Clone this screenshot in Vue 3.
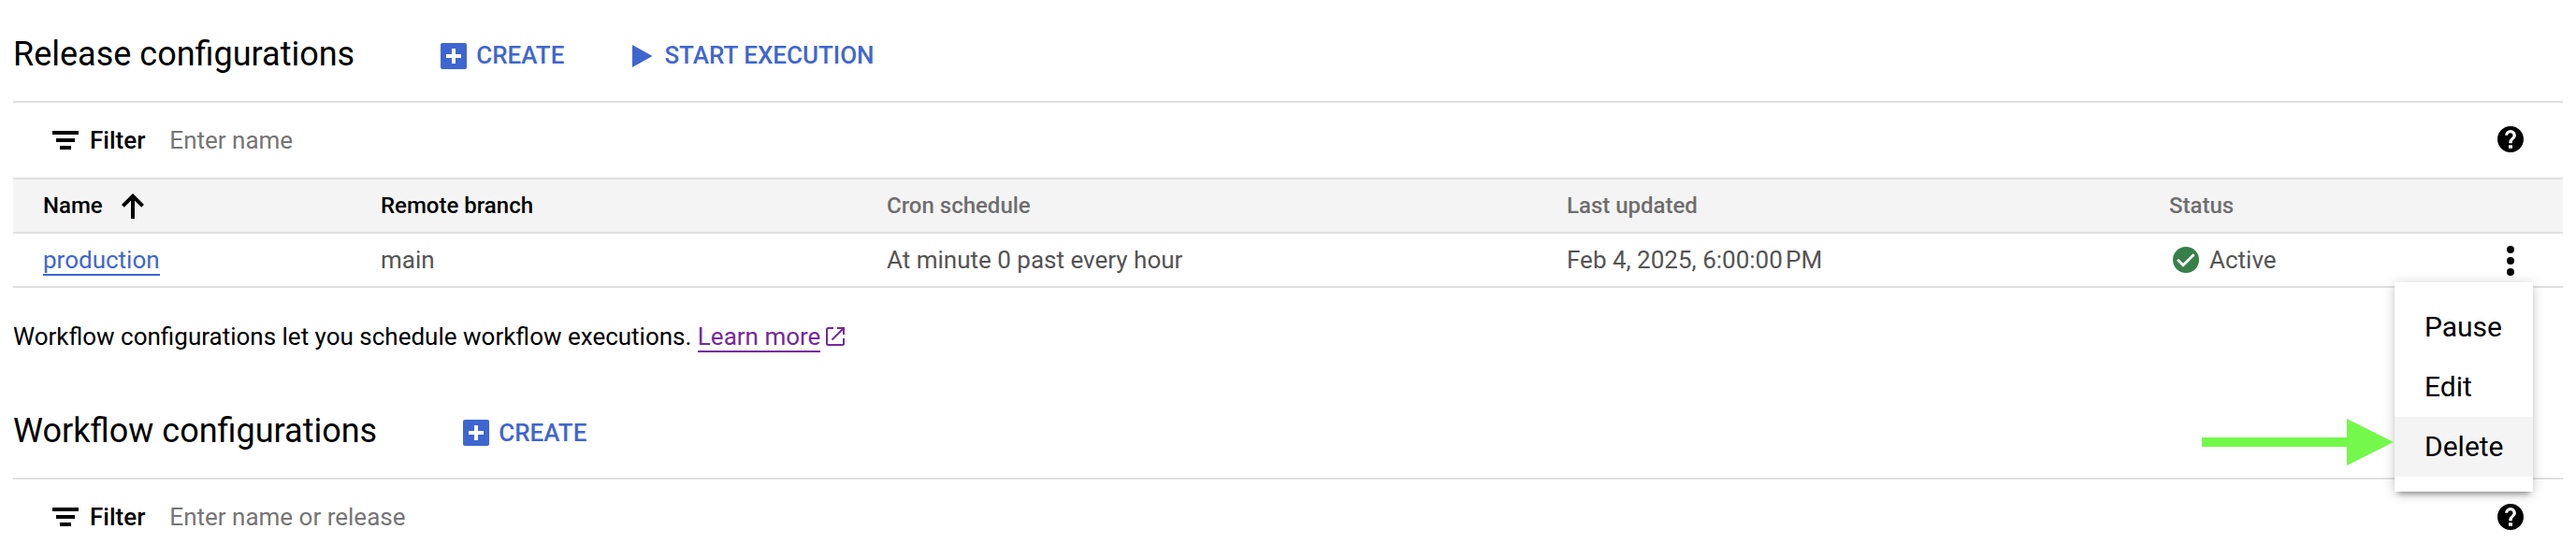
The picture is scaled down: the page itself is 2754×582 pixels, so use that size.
<script setup>
const columns = [
  { label: 'Name', sorted: true, strong: true },
  { label: 'Remote branch', strong: true },
  { label: 'Cron schedule' },
  { label: 'Last updated' },
  { label: 'Status' },
]
const actions = ['Pause', 'Edit', 'Delete']
</script>

<template>
  <main class="page">
    <section>
      <header class="head">
        <h2>Release configurations</h2>
        <button class="btn create">
          <svg width="28" height="28" viewBox="0 0 28 28"><rect width="28" height="28" rx="2" fill="currentColor" /><path d="M6 14h16M14 6v16" stroke="#fff" stroke-width="4" /></svg>
          <span>CREATE</span>
        </button>
        <button class="btn start">
          <svg width="22" height="24" viewBox="0 0 22 24"><path d="M0 0l21.500 12L0 24z" fill="currentColor" /></svg>
          <span>START EXECUTION</span>
        </button>
      </header>
      <div class="filter">
        <svg class="lines" width="28" height="20" viewBox="0 0 28 20"><path d="M0 0h28v4H0zM4 8h20v4H4zM8 16h12v4H8z" /></svg>
        <b>Filter</b>
        <span class="hint">Enter name</span>
        <svg class="help" width="28" height="28" viewBox="2 2 20 20"><path d="M12 2C6.48 2 2 6.48 2 12s4.48 10 10 10 10-4.48 10-10S17.52 2 12 2zm1.400 17h-2.800v-2.500h2.800V19zm1.900-7.750l-.9.92c-.72.73-1.200 1.330-1.200 2.830h-2.400v-.5c0-1.100.45-2.100 1.170-2.830l1.240-1.260c.37-.36.59-.86.59-1.410a1.900 1.900 0 0 0-3.800 0H7.800a4.200 4.200 0 0 1 8.400 0c0 .88-.36 1.680-.9 2.250z" /></svg>
      </div>
      <div class="grid thead">
        <div v-for="c in columns" :key="c.label" :class="{ strong: c.strong }">
          <span>{{ c.label }}</span>
          <svg v-if="c.sorted" class="sort" width="24" height="27" viewBox="0 0 24 27"><path d="M12 27V3M1.400 13.400L12 2.800l10.600 10.600" fill="none" stroke="#000" stroke-width="4" /></svg>
        </div>
      </div>
      <div class="grid row">
        <div class="name"><a class="link">production</a></div>
        <div>main</div>
        <div>At minute 0 past every hour</div>
        <div>Feb 4, 2025, 6:00:00&#8239;PM</div>
        <div class="status">
          <svg width="28" height="28" viewBox="0 0 28 28"><circle cx="14" cy="14" r="14" fill="#37804a" /><path d="M5 13.800l6 6L22.600 8.200" fill="none" stroke="#fff" stroke-width="2.800" /></svg>
          <span>Active</span>
        </div>
        <div class="more">
          <svg width="8" height="32" viewBox="0 0 8 32"><circle cx="4" cy="4" r="4" /><circle cx="4" cy="16" r="4" /><circle cx="4" cy="28" r="4" /></svg>
          <div class="menu">
            <div v-for="a in actions" :key="a" class="item" :class="{ hover: a === 'Delete' }">{{ a }}</div>
            <svg class="pointer" width="205" height="50" viewBox="0 0 205 50"><path d="M0 20h155V0l50 25-50 25V30H0z" fill="#74f84b" /></svg>
          </div>
        </div>
      </div>
    </section>

    <p class="note">
      <span>Workflow configurations let you schedule workflow executions.&nbsp;</span><a class="link visited">Learn more</a>
      <svg width="20" height="20" viewBox="0 0 20 20"><path d="M8 1H2.500Q1 1 1 2.500v15Q1 19 2.500 19h15q1.500 0 1.500-1.500V12M12 1h7v7M18.800 1.200L6.500 13.500" fill="none" stroke="currentColor" stroke-width="2" /></svg>
    </p>

    <section>
      <header class="head second">
        <h2>Workflow configurations</h2>
        <button class="btn create">
          <svg width="28" height="28" viewBox="0 0 28 28"><rect width="28" height="28" rx="2" fill="currentColor" /><path d="M6 14h16M14 6v16" stroke="#fff" stroke-width="4" /></svg>
          <span>CREATE</span>
        </button>
      </header>
      <div class="filter second">
        <svg class="lines" width="28" height="20" viewBox="0 0 28 20"><path d="M0 0h28v4H0zM4 8h20v4H4zM8 16h12v4H8z" /></svg>
        <b>Filter</b>
        <span class="hint">Enter name or release</span>
        <svg class="help" width="28" height="28" viewBox="2 2 20 20"><path d="M12 2C6.48 2 2 6.48 2 12s4.48 10 10 10 10-4.48 10-10S17.52 2 12 2zm1.400 17h-2.800v-2.500h2.800V19zm1.900-7.750l-.9.92c-.72.73-1.200 1.330-1.200 2.830h-2.400v-.5c0-1.100.45-2.100 1.170-2.830l1.240-1.260c.37-.36.59-.86.59-1.410a1.900 1.900 0 0 0-3.800 0H7.800a4.200 4.200 0 0 1 8.400 0c0 .88-.36 1.680-.9 2.250z" /></svg>
      </div>
    </section>
  </main>
</template>

<style>
body {
  background: #fff;
}
</style>

<style scoped>
.page {
  box-sizing: border-box;
  height: 582px;
  overflow: hidden;
  padding: 0 14px;
  font: 400 26px/30px Roboto, sans-serif;
  color: #000;
  white-space: nowrap;
}
svg {
  display: block;
  flex: none;
}
.head {
  display: flex;
  align-items: center;
  box-sizing: border-box;
  height: 110px;
  padding-top: 8px;
  border-bottom: 2px solid #e0e0e0;
}
.head.second {
  height: 111px;
  padding-top: 9px;
}
h2 {
  margin: 0;
  font-size: 36px;
  line-height: 42px;
  font-weight: 400;
}
.btn {
  display: flex;
  align-items: center;
  gap: 10px;
  margin: 4px 0 0;
  padding: 0;
  border: 0;
  background: none;
  color: #3f66d0;
  font: 500 26px/30px Roboto, sans-serif;
}
.btn span {
  margin-top: -2px;
}
.second .btn span {
  margin-top: 0;
}
.create {
  margin-left: 92px;
}
.start {
  margin-left: 73px;
  gap: 12px;
}
.filter {
  display: flex;
  align-items: center;
  height: 80px;
  padding: 0 42px;
}
.filter b {
  margin-left: 12px;
  font-weight: 500;
}
.hint {
  margin-left: 26px;
  color: #757575;
}
.help {
  margin: 0 0 2px auto;
}
.second .help {
  margin-bottom: 0;
}
.grid {
  display: grid;
  grid-template-columns: 361px 541px 727px 644px 1fr;
  align-items: center;
  height: 56px;
  padding-left: 32px;
  border-bottom: 2px solid #e0e0e0;
}
.thead {
  border-top: 2px solid #e0e0e0;
  background: #f4f4f4;
  font-size: 24px;
  font-weight: 500;
  color: #6e6e6e;
}
.thead > div {
  display: flex;
  align-items: center;
}
.thead > .strong {
  color: #000;
}
.sort {
  margin-left: 20px;
}
.row {
  grid-template-columns: 361px 541px 727px 644px 1fr 60px;
  color: #545454;
}
.name {
  display: flex;
}
.link {
  height: 30px;
  margin-top: 2px;
  border-bottom: 2px solid #3f66d0;
  color: #3f66d0;
}
.status {
  display: flex;
  align-items: center;
  gap: 11px;
  padding-left: 4px;
}
.more {
  position: relative;
  color: #000;
  padding-top: 2px;
}
.menu {
  position: absolute;
  top: 41px;
  right: 32px;
  width: 148px;
  box-sizing: border-box;
  padding: 16px 0;
  background: #fff;
  box-shadow: 0 6px 6px -4px rgba(0, 0, 0, 0.36), 0 2px 12px rgba(0, 0, 0, 0.22);
  font-size: 30px;
}
.item {
  height: 64px;
  padding-left: 32px;
  line-height: 64px;
}
.item.hover {
  background: #f4f4f4;
}
.pointer {
  position: absolute;
  right: 149px;
  top: 146px;
}
.note {
  display: flex;
  align-items: center;
  height: 84px;
  margin: 0;
  padding-top: 10px;
}
.note .visited {
  border-color: #7627a0;
  color: #7627a0;
}
.note svg {
  margin-left: 6px;
  color: #7627a0;
}
</style>
